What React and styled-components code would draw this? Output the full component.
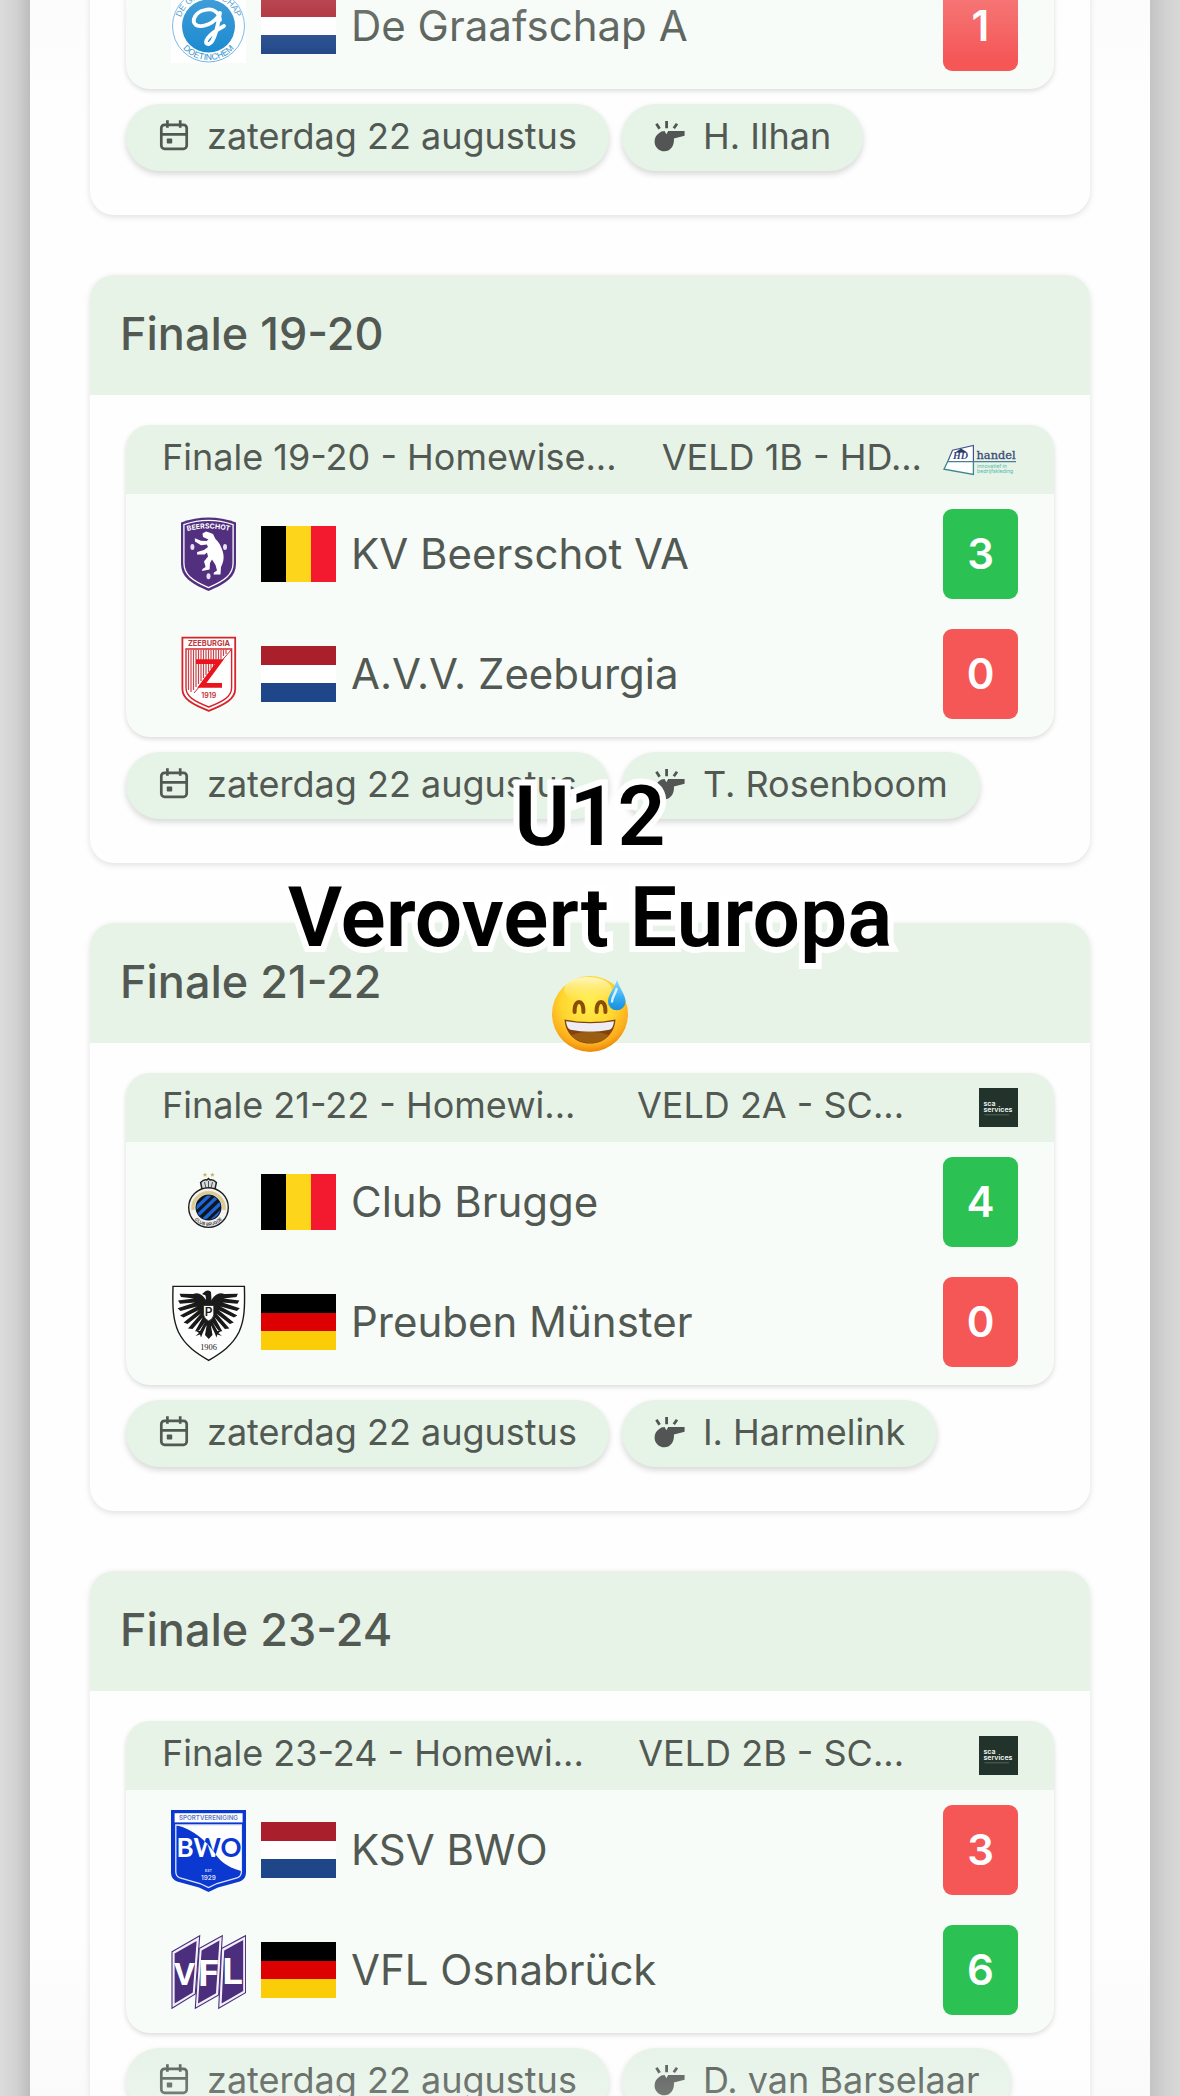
// App.jsx

import React from 'react';
import styled, { createGlobalStyle } from 'styled-components';

const GlobalStyle = createGlobalStyle`
  * {
    box-sizing: border-box;
  }

  body {
    margin: 0;
    font-family: Inter, "Liberation Sans", sans-serif;
    color: #525953;
    background: #d6d6d6;
  }
`;

const Page = styled.div`
  position: relative;
  height: 100vh;
  overflow: hidden;
  padding: 0 30px;
  background: linear-gradient(90deg, #dcdcdc 0, #d2d2d2 16px, #bdbdbd 30px, #c4c4c4 calc(100% - 30px), #d2d2d2 calc(100% - 14px), #d8d8d8 100%);
`;

const Sheet = styled.main`
  display: flow-root;
  height: 100%;
  padding: 0 60px;
  background: linear-gradient(#fcfcfc 0, #fefefe 120px, #fefefe calc(100% - 160px), #fafafa 100%);
`;

const List = styled.div`
  display: flex;
  flex-direction: column;
  gap: 60px;
  margin-top: -34px;
`;

const Card = styled.section`
  border-radius: 24px;
  background: #fefefe;
  box-shadow: 0 2px 6px rgba(0, 0, 0, 0.12);
`;

const CardTitle = styled.h2`
  margin: 0;
  padding: 0 30px;
  height: 120px;
  line-height: 118px;
  font-size: 45px;
  font-weight: 500;
  border-radius: 24px 24px 0 0;
  background: #e7f3e7;
`;

const CardBody = styled.div`
  padding: ${(props) => (props.$cut ? '0' : '30px')} 36px 44px;
`;

const Match = styled.div`
  padding-bottom: 3px;
  border-radius: 24px;
  background: #f7fcf8;
  box-shadow: 0 2px 5px rgba(0, 0, 0, 0.14);
`;

const MatchHead = styled.div`
  display: flex;
  align-items: center;
  height: 69px;
  padding: 0 36px;
  font-size: 36px;
  line-height: 44px;
  white-space: nowrap;
  border-radius: 24px 24px 0 0;
  background: #e7f3e7;
`;

const HeadText = styled.span`
  padding-bottom: 6px;
`;

const Field = styled(HeadText)`
  margin-left: auto;
`;

const Sponsor = styled.span`
  display: flex;
  justify-content: flex-end;
  width: ${(props) => (props.$wide ? '96px' : '114px')};
`;

const Team = styled.div`
  display: flex;
  align-items: center;
  gap: 15px;
  height: 120px;
  padding: 0 36px 0 45px;
`;

const Crest = styled.svg`
  flex: none;
  width: 75px;
  height: 84px;
`;

const Flag = styled.span`
  flex: none;
  width: 75px;
  height: 56px;
  background: ${(props) =>
    `linear-gradient(${props.$dir}, ${props.$colors[0]} 33.3%, ${props.$colors[1]} 33.3% 66.6%, ${props.$colors[2]} 66.6%)`};
`;

const TeamName = styled.span`
  flex: 1;
  font-size: 42px;
  line-height: 52px;
`;

const Score = styled.span`
  width: 75px;
  height: 90px;
  line-height: 90px;
  border-radius: 9px;
  font-size: 42px;
  font-weight: 600;
  text-align: center;
  color: #fff;
  background: ${(props) => (props.$win ? '#2bc253' : '#f55757')};
`;

const Pills = styled.div`
  display: flex;
  gap: 13px;
  margin-top: 15px;
`;

const Pill = styled.span`
  display: flex;
  align-items: center;
  gap: 15px;
  height: 67px;
  padding: 0 32px 4px 30px;
  border-radius: 34px;
  font-size: 36px;
  line-height: 44px;
  background: #e6f3e7;
  box-shadow: 0 3px 6px rgba(0, 0, 0, 0.16);

  svg {
    margin-top: 2px;
  }
`;

const Caption = styled.div`
  position: absolute;
  top: 766px;
  left: 0;
  right: 0;
  display: flex;
  flex-direction: column;
  align-items: center;
  color: #000;
  font-family: Roboto, "Liberation Sans", sans-serif;
  font-size: 84px;
  font-weight: 600;
  line-height: 101px;
  -webkit-text-stroke: 12px #fff;
  paint-order: stroke fill;
`;

const Emoji = styled.svg`
  width: 78px;
  height: 78px;
  margin-top: 7px;
`;

const Fade = styled.div`
  position: absolute;
  inset: 0 30px;
  pointer-events: none;
  background: linear-gradient(rgba(250, 250, 250, 0.18) 0, rgba(250, 250, 250, 0) 60px, rgba(250, 250, 250, 0) calc(100% - 60px), rgba(250, 250, 250, 0.22) 100%);
`;

const flags = {
  nl: { dir: '180deg', colors: ['#a91f2b', '#ffffff', '#1f4688'] },
  be: { dir: '90deg', colors: ['#000000', '#fdd51b', '#f31a30'] },
  de: { dir: '180deg', colors: ['#000000', '#dc0000', '#fbcd09'] },
};

const CalendarIcon = () => (
  <svg width="36" height="36" viewBox="0 0 36 36" fill="none" stroke="#525953" strokeWidth="2.7">
    <rect x="5.3" y="5.8" width="25.4" height="24" rx="3.2" />
    <path d="M5.3 15.3h25.4M11.4 1.2v7.6M24.2 1.2v7.6" />
    <rect x="10.8" y="19.4" width="5.4" height="5.2" rx="0.8" fill="#525953" stroke="none" />
  </svg>
);

const WhistleIcon = () => (
  <svg width="36" height="36" viewBox="0 0 36 36">
    <path
      d="M6.6 14.6C8.3 12.8 10.5 12 12.6 12L14.3 15.2 16.2 12H32.6V16.8L21.9 19.5C22.6 25.6 19.2 32.3 12.4 32.3 7 32.3 2.6 28 2.6 22.7 2.6 19 4.2 16.4 6.6 14.6Z"
      fill="#525553"
    />
    <path d="M14.6 2v7.2M4.4 4.8l3.2 5M25 4.8l-3.2 4.4" fill="none" stroke="#525553" strokeWidth="2.8" />
  </svg>
);

const Graafschap = () => (
  <Crest viewBox="0 0 75 84">
    <defs>
      <path id="graafTop" d="M8.5 42a29 29 0 0 1 58 0" />
      <path id="graafBottom" d="M3.5 42a34 34 0 0 0 68 0" />
    </defs>
    <rect y="4" width="75" height="75" fill="#fff" />
    <circle cx="37.5" cy="42" r="36" fill="#fff" stroke="#4ba3da" strokeWidth="0.8" />
    <circle cx="37.5" cy="42" r="26.5" fill="#1688cf" />
    <path
      d="M49 36C48 28 42 24 34 26 24 28 20 37 25 41 31 44 44 40 49 29 47 40 44 58 38 60 31 60 36 51 53 42"
      fill="none"
      stroke="#fff"
      strokeWidth="3.8"
      strokeLinecap="round"
      strokeLinejoin="round"
    />
    <g fill="#2f8ec8" fontFamily="Liberation Sans" fontSize="8.6" textAnchor="middle">
      <text><textPath href="#graafTop" startOffset="50%">DE GRAAFSCHAP</textPath></text>
      <text><textPath href="#graafBottom" startOffset="50%">DOETINCHEM</textPath></text>
    </g>
  </Crest>
);

const Beerschot = () => (
  <Crest viewBox="0 0 75 84">
    <defs>
      <path id="beerArc" d="M10 20.6Q37.5 12.5 65 20.6" />
    </defs>
    <path d="M10 10.5Q37.5 .6 65 10.5V51C65 65 56 71 37.5 79 19 71 10 65 10 51Z" fill="#53307f" />
    <path d="M12.9 12.6Q37.5 4.2 62.1 12.6V51C62.1 62.6 54 68.4 37.5 75.6 21 68.4 12.9 62.6 12.9 51Z" fill="none" stroke="#fff" strokeWidth="1.3" />
    <text fill="#fff" fontFamily="Inter" fontWeight="700" fontSize="7" textAnchor="middle">
      <textPath href="#beerArc" startOffset="50%">BEERSCHOT</textPath>
    </text>
    <path
      d="M31.5 21.5 35 19.6 39 20.8 42 22 44.5 27C48 30 50 34 51.6 39 53.8 46 52 51 50 55L49.5 62.5H42.5L43 60.5 46 58.5 44.5 53 41 47.5 39 51 38.6 57.5 31 59 31.5 57 34.6 55 33 49.5 37 44.5 36 40.5 33.6 42.6 26 42.4 26.2 40 33 38 37 35 35.8 32.5 30 33.3 24 29.4 23.8 26.2 30 28.8 35.6 29 37.5 27.5 32 25Z"
      fill="#fff"
    />
    <g fill="#e8e0f2">
      <ellipse cx="21.4" cy="35" rx="2" ry="3" />
      <ellipse cx="54" cy="35" rx="2" ry="3" />
      <ellipse cx="37.5" cy="64.2" rx="2" ry="3" />
    </g>
  </Crest>
);

const Zeeburgia = () => (
  <Crest viewBox="0 0 75 84">
    <path d="M11.4 5.6H64.2V57C64.2 67 54 72.5 37.8 78.8 21.6 72.5 11.4 67 11.4 57Z" fill="#fff" stroke="#d8232a" strokeWidth="1.8" />
    <path d="M15 17H60.6V56C60.6 64.5 52 69.5 37.8 75 23.6 69.5 15 64.5 15 56Z" fill="none" stroke="#d8232a" strokeWidth="1.4" />
    <path
      d="M17.5 18V58M20 18V60M22.5 18V58M25 18V55M27.5 18V52M30 18V49M32.5 18V46M35 18V43M37.5 18V40M40 18V37M42.5 18V35M45 18V32M47.5 18V30M50 18V27M52.5 18V24M55 18V22"
      stroke="#c9444a"
      strokeWidth="1.2"
    />
    <path d="M60 18 23 61" stroke="#d8232a" strokeWidth="1" />
    <text x="38" y="14.2" fontFamily="Inter" fontWeight="700" fontSize="7.4" textAnchor="middle" fill="#b83a40">ZEEBURGIA</text>
    <path d="M25 29.6H48.4L30.8 53.4H51" fill="none" stroke="#ea141c" strokeWidth="4.6" />
    <text x="37.8" y="66" fontFamily="Inter" fontWeight="600" fontSize="7" textAnchor="middle" fill="#c02c33">1919</text>
  </Crest>
);

const Brugge = () => (
  <Crest viewBox="0 0 75 84">
    <defs>
      <clipPath id="bruggeCore">
        <circle cx="37.5" cy="47.6" r="12" />
      </clipPath>
      <path id="bruggeArc" d="M19.3 47.6a18.2 18.2 0 0 0 36.4 0" />
    </defs>
    <path
      d="m34 12.4.7 1.5 1.6.2-1.2 1.1.3 1.6-1.4-.8-1.4.8.3-1.6-1.2-1.1 1.6-.2zM41.4 12.4l.7 1.5 1.6.2-1.2 1.1.3 1.6-1.4-.8-1.4.8.3-1.6-1.2-1.1 1.6-.2z"
      fill="#c9b56b"
    />
    <path d="M31 29 29.6 22.5Q33 19.2 36 20L37.5 18.5 39 20Q42 19.2 45.4 22.5L44 29Z" fill="#d9dadd" stroke="#222" strokeWidth="1.5" />
    <path d="M33.5 22 35 28M37.5 21V28M41.5 22 40 28" stroke="#444" strokeWidth="0.9" />
    <circle cx="37.5" cy="47.6" r="19.8" fill="#f4f3ee" stroke="#1d1f24" strokeWidth="1.4" />
    <path d="M22 50a15.6 15.6 0 1 1 31 0" fill="none" stroke="#dccb92" strokeWidth="3.4" />
    <circle cx="37.5" cy="47.6" r="13" fill="#11151f" />
    <g clipPath="url(#bruggeCore)" stroke="#1c66d6" strokeWidth="3.4">
      <path d="M20 53 43 31M24 58 49 34M28 64 54 39M34 67 58 44" />
    </g>
    <text fill="#33363c" fontFamily="Inter" fontWeight="600" fontSize="4.4" textAnchor="middle">
      <textPath href="#bruggeArc" startOffset="50%">CLUB BRUGGE</textPath>
    </text>
  </Crest>
);

const EagleWing = () => (
  <g fill="#1a1a1a">
    <path d="M35 20C31 13.5 27 12 22 14L8.5 13.8 10 17 23 18.5 7 20.5 9 23.8 24 22.5 6.6 28.2 9.5 31 26 26.5 9 35.5 12.5 37.6 28 30 12.6 42.5 16.5 44 30 33.5 17 48.5 21.5 49 32 37 24 51.5 28 50.5 35 41Z" />
    <path d="M34 42 29 51 24.5 50.5 28 53 24.5 56 29 54.5 30 57.5 31.5 53.5 36 44Z" />
  </g>
);

const Munster = () => (
  <Crest viewBox="0 0 75 84">
    <path d="M2 6.4H73.4C74 28 73.5 40 68 52 61 66 50 73 37.7 80.4 25.4 73 14.4 66 7.4 52 2 40 1.4 28 2 6.4Z" fill="#fff" stroke="#1a1a1a" strokeWidth="1.4" />
    <EagleWing />
    <g transform="translate(75.4 0) scale(-1 1)">
      <EagleWing />
    </g>
    <path d="M31 14 34 11.5Q37 9.5 40 12L40.5 20 44 27V38L40 46 41.5 55 37.7 59 34 55 35.5 46 31.5 38V27L35 19 34.5 15.5Z" fill="#1a1a1a" />
    <path d="M32.6 25.5H42.8V35Q42 39 37.7 41 33.4 39 32.6 35Z" fill="#fff" stroke="#1a1a1a" strokeWidth="0.8" />
    <text x="37.7" y="36.4" fontFamily="Inter" fontWeight="600" fontSize="12" textAnchor="middle" fill="#1a1a1a">P</text>
    <text x="37.5" y="69.5" fontFamily="Liberation Serif" fontSize="8.4" textAnchor="middle" fill="#1a1a1a">1906</text>
  </Crest>
);

const Bwo = () => (
  <Crest viewBox="0 0 75 84">
    <defs>
      <clipPath id="bwoLight">
        <path d="M5.5 17.2H70V63C55 59 48 52 43 44 36 34 24 22 5.5 17.2Z" />
      </clipPath>
    </defs>
    <path d="M0 2H75V64C75 70 72 72.5 67 74L47 79.5 37.5 84 28 79.5 8 74C3 72.5 0 70 0 64Z" fill="#0a38d0" />
    <rect x="3.6" y="5.2" width="68" height="9.2" fill="#fff" />
    <path d="M4.8 17V64Q5 68.5 9 70L29 75.5 37.5 79.6 46 75.5 66 70Q70.2 68.5 70.4 64V17Z" fill="none" stroke="#dfe6fb" strokeWidth="1.3" />
    <path d="M5.5 17.2H70V63C55 59 48 52 43 44 36 34 24 22 5.5 17.2Z" fill="#fff" />
    <text x="37.5" y="12.2" fontFamily="Inter" fontWeight="600" fontSize="6.2" textAnchor="middle" fill="#5b76c9">SPORTVERENIGING</text>
    <g fontFamily="Lato" fontWeight="700" fontSize="26" textAnchor="middle">
      <text x="38" y="48.5" fill="#fff">BWO</text>
      <text x="38" y="48.5" fill="#0a38d0" clipPath="url(#bwoLight)">BWO</text>
    </g>
    <g fontFamily="Inter" fontWeight="600" textAnchor="middle" fill="#d5ddf8">
      <text x="37.5" y="64" fontSize="3.6">EST</text>
      <text x="37.5" y="71.5" fontSize="6.4">1929</text>
    </g>
  </Crest>
);

const Vfl = () => (
  <Crest viewBox="0 0 75 84">
    <g fill="#f4f0fa" stroke="#4b2f7c" strokeWidth="1.1">
      <path d="M1 23.7 28.7 7.7 24.3 66 1 80.3Z" />
      <path d="M28.2 20.6 51.3 7.7 47.7 67 24.3 80.3Z" />
      <path d="M50.6 20.6 74.6 7.7V64.7L47.7 80.3Z" />
    </g>
    <g fill="#4b2f7c">
      <path d="M3.6 25.6 25.6 13 21.8 64.4 3.6 75.6Z" />
      <path d="M30.6 22.4 48.4 12.6 45 65.2 27 75.6Z" />
      <path d="M53.2 22.4 72.2 12V63L50.6 75.6Z" />
    </g>
    <g fill="#fff" fontFamily="Roboto" fontWeight="700" textAnchor="middle">
      <text x="13.5" y="57" fontSize="32">V</text>
      <text x="37.5" y="58" fontSize="37">F</text>
      <text x="61.5" y="56" fontSize="37">L</text>
    </g>
  </Crest>
);

const HandelLogo = () => (
  <svg width="75" height="32" viewBox="0 0 75 32">
    <path d="M9.5 6.2 30.4 1.4V30.6L1 25.2Z" fill="#fff" />
    <path d="M30.4 18V1.4L9.5 6.2 5.4 16" fill="none" stroke="#44548a" strokeWidth="1.2" />
    <path d="M5.4 16 1 25.2 30.4 30.4V18" fill="none" stroke="#3b8791" strokeWidth="1.3" />
    <path d="M4.5 17.7H73" stroke="#4a8193" strokeWidth="1.3" />
    <path d="m12 8.6 6-4 6.5 4z" fill="#2b3a66" />
    <text x="17.5" y="15" fontFamily="Liberation Serif" fontStyle="italic" fontWeight="700" fontSize="10" textAnchor="middle" fill="#35467a">HD</text>
    <text x="33.5" y="14.8" fontFamily="DejaVu Serif" fontSize="11.4" fill="#3a4a78" stroke="#3a4a78" strokeWidth="0.3">handel</text>
    <g fontFamily="Inter" fontSize="5.2" fill="#4fb9ac">
      <text x="34" y="23.5">innovatief in</text>
      <text x="34" y="28.5">bedrijfskleding</text>
    </g>
  </svg>
);

const ScaLogo = () => (
  <svg width="39" height="39" viewBox="0 0 39 39">
    <rect width="39" height="39" fill="#22332b" />
    <g fontFamily="Inter" fontWeight="600" fontSize="7" fill="#f2f5f3">
      <text x="4.5" y="17.5">sca</text>
      <text x="4.5" y="23.8">services</text>
    </g>
    <path d="M5.5 26.8H30" stroke="#62716a" strokeWidth="0.8" />
  </svg>
);

const SweatSmile = () => (
  <Emoji viewBox="0 0 78 78">
    <defs>
      <radialGradient id="face" cx="0.48" cy="0.35" r="0.66">
        <stop offset="0" stopColor="#fff04d" />
        <stop offset="0.55" stopColor="#ffd52e" />
        <stop offset="0.85" stopColor="#fbab1b" />
        <stop offset="1" stopColor="#e88408" />
      </radialGradient>
      <linearGradient id="shine" x1="0" y1="0" x2="0" y2="1">
        <stop offset="0" stopColor="#fffbd0" stopOpacity="0.9" />
        <stop offset="1" stopColor="#fff27a" stopOpacity="0" />
      </linearGradient>
      <linearGradient id="drop" x1="0" y1="0" x2="0" y2="1">
        <stop offset="0" stopColor="#8edcff" />
        <stop offset="0.6" stopColor="#34abf0" />
        <stop offset="1" stopColor="#168ee0" />
      </linearGradient>
    </defs>
    <circle cx="39" cy="39" r="38" fill="url(#face)" />
    <ellipse cx="37" cy="15" rx="24" ry="13" fill="url(#shine)" />
    <path
      d="M23.6 37C23.4 29 26 27 28 27S32.6 29 32.4 37M45.6 37C45.4 29 48 27 50 27S54.6 29 54.4 37"
      fill="none"
      stroke="#8b4d08"
      strokeWidth="4"
      strokeLinecap="round"
    />
    <path d="M13.5 44.5Q39 49.5 64.5 44.5C63.5 58 54 68.5 39 68.5S14.5 58 13.5 44.5Z" fill="#81420b" />
    <path d="M15 46.2Q39 50.5 63 46.2 62.4 53 58.5 54.8 39 58.5 19.5 54.8 15.6 53 15 46.2Z" fill="#eeedf5" />
    <path d="M20 60Q39 53.5 58 60 51 68 39 68T20 60Z" fill="#9a5d12" />
    <path d="M66 5C69 14 74.5 20 74.5 26.5A8.7 8.7 0 0 1 57 26.5C57 20 63 14 66 5Z" fill="url(#drop)" />
    <path d="M65.5 14C64.5 19 61 22 61 26.5" fill="none" stroke="#d5f4ff" strokeWidth="2.4" strokeLinecap="round" />
  </Emoji>
);

const finals = [
  {
    cut: true,
    teams: [{ name: 'De Graafschap A', flag: 'nl', crest: Graafschap, score: 1, win: false }],
    referee: 'H. Ilhan',
  },
  {
    title: 'Finale 19-20',
    match: 'Finale 19-20 - Homewise...',
    field: 'VELD 1B - HD...',
    logo: HandelLogo,
    wide: true,
    teams: [
      { name: 'KV Beerschot VA', flag: 'be', crest: Beerschot, score: 3, win: true },
      { name: 'A.V.V. Zeeburgia', flag: 'nl', crest: Zeeburgia, score: 0, win: false },
    ],
    referee: 'T. Rosenboom',
  },
  {
    title: 'Finale 21-22',
    match: 'Finale 21-22 - Homewi...',
    field: 'VELD 2A - SC...',
    logo: ScaLogo,
    teams: [
      { name: 'Club Brugge', flag: 'be', crest: Brugge, score: 4, win: true },
      { name: 'Preuben Münster', flag: 'de', crest: Munster, score: 0, win: false },
    ],
    referee: 'I. Harmelink',
  },
  {
    title: 'Finale 23-24',
    match: 'Finale 23-24 - Homewi...',
    field: 'VELD 2B - SC...',
    logo: ScaLogo,
    teams: [
      { name: 'KSV BWO', flag: 'nl', crest: Bwo, score: 3, win: false },
      { name: 'VFL Osnabrück', flag: 'de', crest: Vfl, score: 6, win: true },
    ],
    referee: 'D. van Barselaar',
  },
];

const FinalCard = ({ final }) => {
  const Logo = final.logo;

  return (
    <Card>
      {final.title && <CardTitle>{final.title}</CardTitle>}
      <CardBody $cut={final.cut}>
        <Match>
          {final.match && (
            <MatchHead>
              <HeadText>{final.match}</HeadText>
              <Field>{final.field}</Field>
              <Sponsor $wide={final.wide}>
                <Logo />
              </Sponsor>
            </MatchHead>
          )}
          {final.teams.map((team) => {
            const TeamCrest = team.crest;
            const flag = flags[team.flag];
            return (
              <Team key={team.name}>
                <TeamCrest />
                <Flag $dir={flag.dir} $colors={flag.colors} />
                <TeamName>{team.name}</TeamName>
                <Score $win={team.win}>{team.score}</Score>
              </Team>
            );
          })}
        </Match>
        <Pills>
          <Pill>
            <CalendarIcon />
            zaterdag 22 augustus
          </Pill>
          <Pill>
            <WhistleIcon />
            {final.referee}
          </Pill>
        </Pills>
      </CardBody>
    </Card>
  );
};

const App = () => (
  <>
    <GlobalStyle />
    <Page>
      <Sheet>
        <List>
          {finals.map((final) => (
            <FinalCard key={final.referee} final={final} />
          ))}
        </List>
      </Sheet>
      <Fade />
      <Caption>
        <span>U12</span>
        <span>Verovert Europa</span>
        <SweatSmile />
      </Caption>
    </Page>
  </>
);

export default App;
